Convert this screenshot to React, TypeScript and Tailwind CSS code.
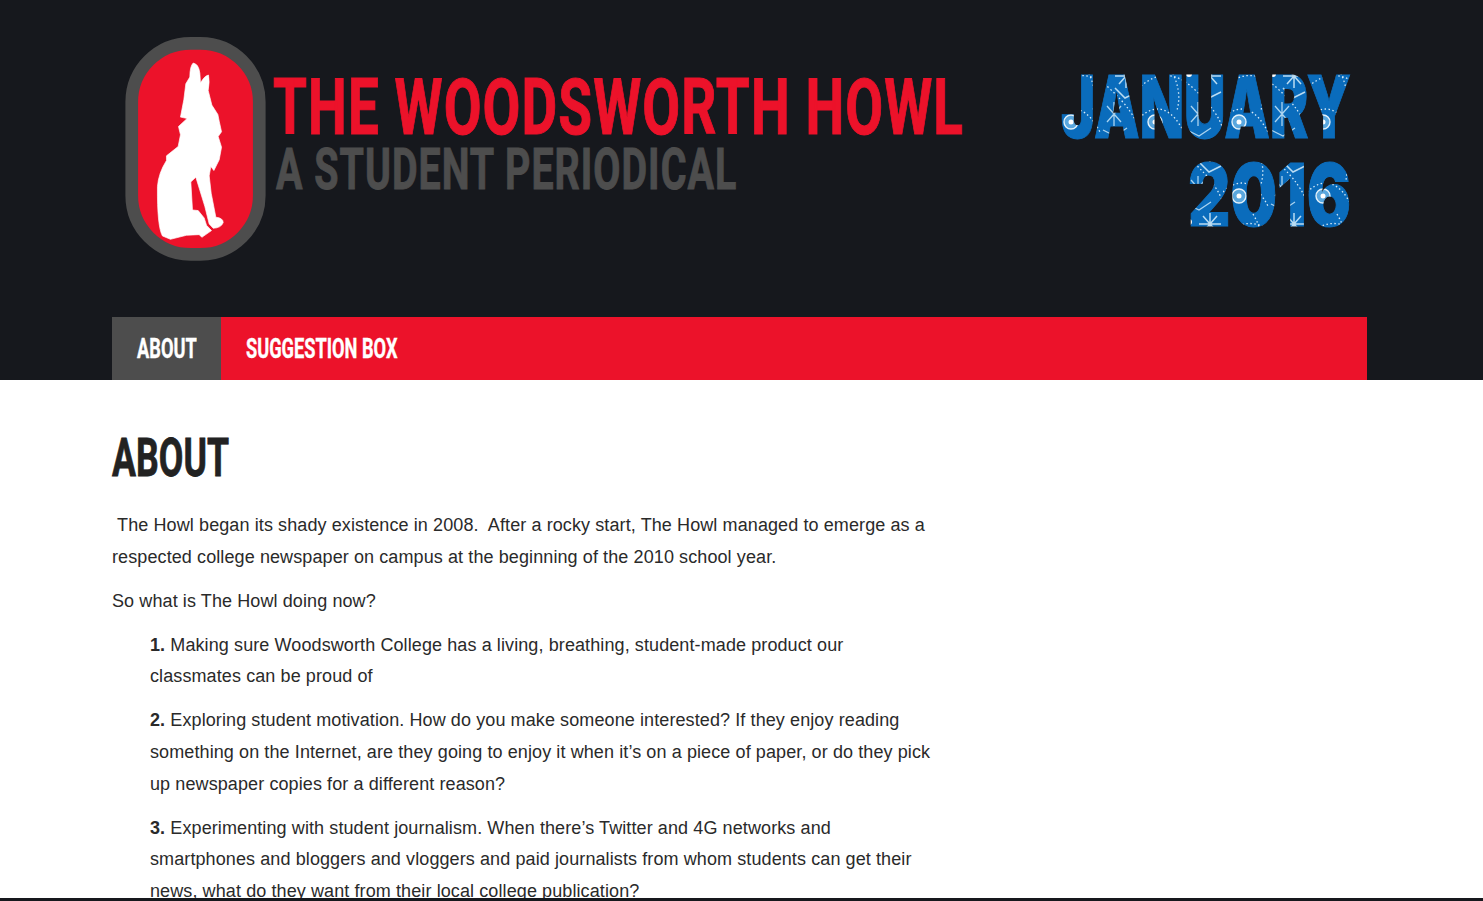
const wolf =
  "M250 130 Q266 132 270 160 L272 190 Q284 168 296 166 Q300 186 295 212 L306 256 L324 284 L328 304 L335 336 L325 350 L335 382 L328 420 L312 452 L303 440 L298 468 L304 520 L318 592 Q340 594 340 608 Q334 624 310 625 L298 612 L285 560 L258 472 L243 486 L248 570 L265 572 L283 594 L290 616 L305 632 L276 652 L268 644 L230 646 L182 658 L158 648 Q142 620 143 500 Q146 460 170 422 L170 408 L205 380 L212 345 L206 320 L232 296 L212 292 L222 240 L228 192 L240 172 Q240 140 250 130 Z";

function Logo() {
  return (
    <svg width="143" height="227" viewBox="40 46 428 680" className="shrink-0">
      <rect x="66" y="71" width="382" height="632" rx="176" fill="#ec122a" stroke="#4d4d4d" strokeWidth="38" />
      <path d={wolf} fill="#fff" stroke="#fff" strokeWidth="2" strokeLinejoin="round" />
    </svg>
  );
}

function DatePattern() {
  return (
    <pattern id="frost" width="84" height="74" patternUnits="userSpaceOnUse">
      <rect width="84" height="74" fill="#0a6cbc" />
      <path d="M2 22 Q28 0 54 24 T84 66" fill="none" stroke="#d6eaf8" strokeWidth="1.3" strokeDasharray="1.5 2.5" />
      <path d="M0 54 Q26 30 46 70" fill="none" stroke="#d6eaf8" strokeWidth="1.3" strokeDasharray="1.5 2.5" />
      <path d="M30 2 Q44 26 38 46" fill="none" stroke="#d6eaf8" strokeWidth="1.3" strokeDasharray="1.5 2.5" />
      <circle cx="16" cy="58" r="7" fill="#5aa7de" stroke="#e4f2fb" strokeWidth="1.4" />
      <circle cx="16" cy="58" r="2.5" fill="#fff" />
      <circle cx="50" cy="10" r="3" fill="#fff" />
      <path d="M64 4 L78 20 M78 4 L64 20 M71 1 L71 24 M60 12 L82 12 M60 24 L70 34 L82 28" fill="none" stroke="#b9dcf3" strokeWidth="1.5" />
      <path d="M52 42 L66 58 M66 42 L52 58 M59 38 L59 62 M48 66 L60 72 L72 64" fill="none" stroke="#a9d3f0" strokeWidth="1.3" />
    </pattern>
  );
}

function DateMark() {
  return (
    <svg width="300" height="170" viewBox="0 0 300 170" className="shrink-0">
      <defs>
        <DatePattern />
      </defs>
      <text
        x="296"
        y="74"
        textAnchor="end"
        textLength="290"
        lengthAdjust="spacingAndGlyphs"
        fill="url(#frost)"
        fontFamily="Inter, 'Liberation Sans', sans-serif"
        fontWeight="900"
        fontSize="86"
        stroke="url(#frost)"
        strokeWidth="1"
      >
        JANUARY
      </text>
      <text
        x="296"
        y="162"
        textAnchor="end"
        textLength="163"
        lengthAdjust="spacingAndGlyphs"
        fill="url(#frost)"
        fontFamily="Inter, 'Liberation Sans', sans-serif"
        fontWeight="900"
        fontSize="86"
        stroke="url(#frost)"
        strokeWidth="1"
      >
        2016
      </text>
    </svg>
  );
}

const condensed = "font-['Roboto','Liberation_Sans',sans-serif] font-bold";

export default function App() {
  return (
    <div className="flex h-screen flex-col overflow-hidden bg-white">
      <header className="shrink-0 bg-[#16181d]">
        <div className="flex h-[317px] pl-[123px] pr-[128px]">
          <div className="mt-[35px]">
            <Logo />
          </div>
          <div className={`ml-[7px] mt-[62px] min-w-0 flex-1 ${condensed}`}>
            <h1 className="w-fit origin-left scale-x-[0.713] text-[77px] leading-[92px] tracking-[1.5px] whitespace-nowrap text-[#ec122a] [-webkit-text-stroke:1px_#ec122a]">THE WOODSWORTH HOWL</h1>
            <p className="ml-[3px] mt-[-19px] w-fit origin-left scale-x-[0.69] text-[57px] leading-[70px] tracking-[1.5px] whitespace-nowrap text-[#4d4d4d] [-webkit-text-stroke:1px_#4d4d4d]">A STUDENT PERIODICAL</p>
          </div>
          <div className="mt-[64px] shrink-0">
            <DateMark />
          </div>
        </div>
        <nav className={`ml-[112px] mr-[116px] flex h-[63px] items-center bg-[#ec122a] pt-[1px] text-[28px] text-white [-webkit-text-stroke:0.4px_#fff] ${condensed}`}>
          <a className="mt-[-1px] flex h-[63px] w-[109px] items-center justify-center bg-[#4d4d4d] pt-[1px]">
            <span className="scale-x-[0.65]">ABOUT</span>
          </a>
          <a className="ml-[25px] origin-left scale-x-[0.65] whitespace-nowrap">SUGGESTION BOX</a>
        </nav>
      </header>
      <main className="min-h-0 flex-1 overflow-hidden px-[112px] font-['Liberation_Sans',sans-serif] text-[18px] leading-[31.68px] tracking-[0.1px] text-[#2a2a2a]">
        <h2 className={`mt-[45px] mb-[19px] w-fit origin-left scale-x-[0.66] text-[54px] leading-[66px] text-[#222] [-webkit-text-stroke:0.8px_#222] ${condensed}`}>ABOUT</h2>
        <div className="w-[820px]">
          <p className="mb-[12.3px]">
            &nbsp;The Howl began its shady existence in 2008.&nbsp; After a rocky start, The Howl managed to emerge as a respected college newspaper on campus at the beginning of the 2010 school year.
          </p>
          <p className="mb-[12.3px]">So what is The Howl doing now?</p>
          <div className="pl-[38px]">
            <p className="mb-[12.3px]">
              <strong>1.</strong> Making sure Woodsworth College has a living, breathing, student-made product our classmates can be proud of
            </p>
            <p className="mb-[12.3px]">
              <strong>2.</strong> Exploring student motivation. How do you make someone interested? If they enjoy reading something on the Internet, are they going to enjoy it when it’s on a piece of paper, or do they pick up newspaper copies for a different reason?
            </p>
            <p className="mb-[12.3px]">
              <strong>3.</strong> Experimenting with student journalism. When there’s Twitter and 4G networks and smartphones and bloggers and vloggers and paid journalists from whom students can get their news, what do they want from their local college publication?
            </p>
          </div>
        </div>
      </main>
      <div className="h-[3px] shrink-0 bg-[#16181d]" />
    </div>
  );
}
